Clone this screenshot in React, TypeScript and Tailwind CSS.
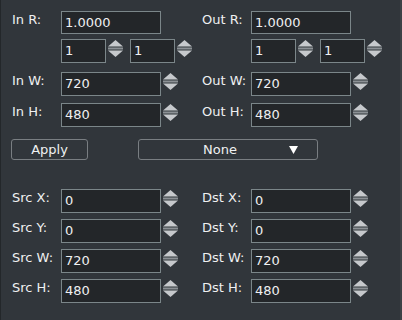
import React from 'react';

const font = { fontFamily: '"DejaVu Sans", "Liberation Sans", sans-serif' };

// up/down arrows of a Qt-like spin box
const Spinner = () => (
    <svg width="15" height="17" viewBox="0 0 15 17" className="ml-[2px] mt-[1px] shrink-0">
        <polygon points="7.5,0 15,6.5 0,6.5" fill="#c6c9cc" />
        <rect x="0" y="7.5" width="15" height="2" fill="#8c9195" />
        <polygon points="0,10.5 15,10.5 7.5,17" fill="#c6c9cc" />
    </svg>
);

const Field: React.FC<{ value: string; w: string }> = ({ value, w }) => (
    <div className={`${w} h-[24px] shrink-0 bg-[#232629] border border-[#7b8689] flex items-center pl-[3px] text-[13px] text-[#eff0f1]`}>
        {value}
    </div>
);

const Row: React.FC<{ label: string; value: string; spin?: boolean; h?: string }> = ({ label, value, spin = true, h = 'h-[24px]' }) => (
    <div className="flex items-start">
        <span className="w-[49px] shrink-0 pt-[1px] text-[13px] leading-[16px] text-[#eff0f1] whitespace-nowrap">{label}</span>
        <div className={`w-[100px] ${h} shrink-0 bg-[#232629] border border-[#7b8689] flex items-center pl-[3px] text-[13px] text-[#eff0f1]`}>
            {value}
        </div>
        {spin && <Spinner />}
    </div>
);

const RatioRow = () => (
    <div className="flex items-start ml-[49px]">
        <Field value="1" w="w-[45px]" />
        <Spinner />
        <div className="ml-[7px]">
            <Field value="1" w="w-[45px]" />
        </div>
        <Spinner />
    </div>
);

const Side: React.FC<{ pre: string }> = ({ pre }) => (
    <div className="flex flex-col">
        <Row label={`${pre} R:`} value="1.0000" spin={false} h="h-[23px]" />
        <div className="mt-[5px]"><RatioRow /></div>
        <div className="mt-[9px]"><Row label={`${pre} W:`} value="720" /></div>
        <div className="mt-[7px]"><Row label={`${pre} H:`} value="480" /></div>
    </div>
);

const Box: React.FC<{ pre: string }> = ({ pre }) => (
    <div className="flex flex-col gap-[6px]">
        <Row label={`${pre} X:`} value="0" />
        <Row label={`${pre} Y:`} value="0" />
        <Row label={`${pre} W:`} value="720" />
        <Row label={`${pre} H:`} value="480" />
    </div>
);

export default function App() {
    return (
        <div className="w-[402px] h-[320px] bg-[#31363b] border-l border-[#23272a] border-r-2 border-r-[#3c4146] pl-[11px] pt-[11px] overflow-hidden" style={font}>
            <div className="grid grid-cols-[190px_190px]">
                <Side pre="In" />
                <Side pre="Out" />
            </div>
            <div className="flex items-center mt-[12px] -ml-[1px]">
                <button className="w-[77px] h-[21px] rounded-[3px] border border-[#797e82] text-[13px] text-[#eff0f1] flex items-center justify-center">
                    Apply
                </button>
                <div className="ml-[50px] w-[180px] h-[21px] rounded-[3px] border border-[#797e82] text-[13px] text-[#eff0f1] flex items-center">
                    <span className="ml-[64px]">None</span>
                    <svg width="9" height="9" viewBox="0 0 9 9" className="ml-[52px]">
                        <polygon points="0,1 9,1 4.5,9" fill="#ffffff" />
                    </svg>
                </div>
            </div>
            <div className="grid grid-cols-[190px_190px] mt-[29px]">
                <Box pre="Src" />
                <Box pre="Dst" />
            </div>
        </div>
    );
}
